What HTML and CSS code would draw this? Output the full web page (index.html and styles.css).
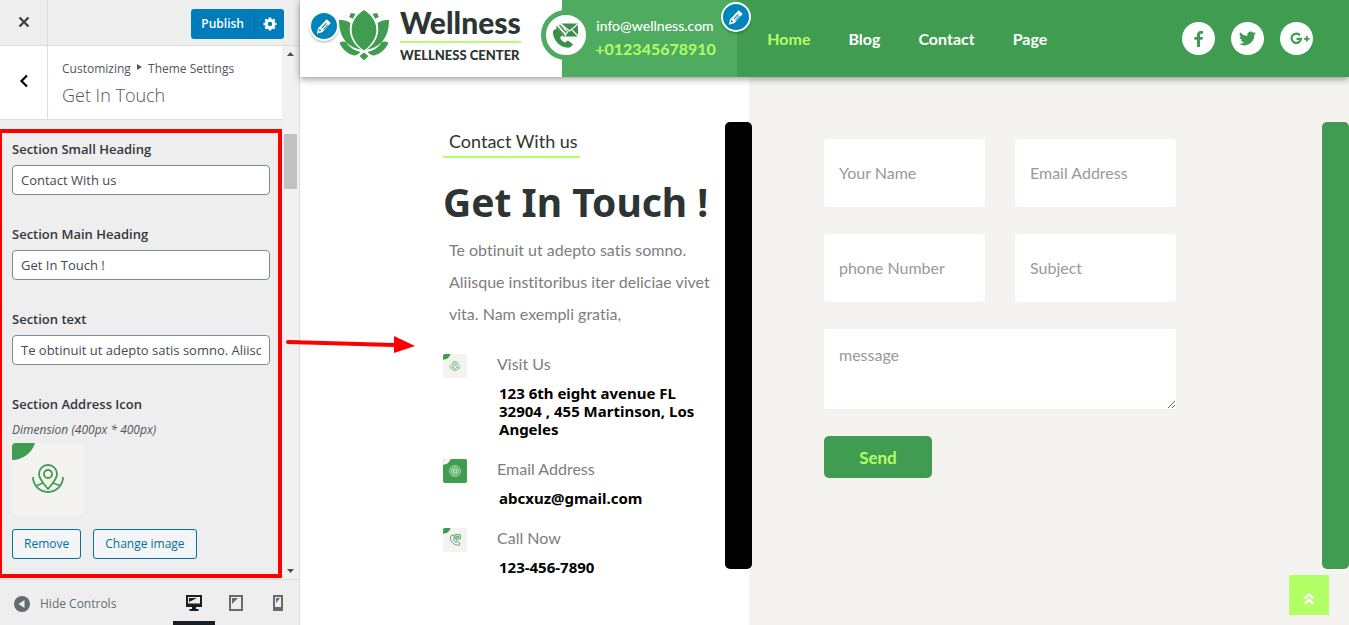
FILE: index.html
```html
<!DOCTYPE html>
<html lang="en">
<head>
<meta charset="utf-8">
<meta name="viewport" content="width=device-width, initial-scale=1">
<title>Customize: Get In Touch</title>
<link rel="stylesheet" href="styles.css">
</head>
<body>
<svg class="defs" aria-hidden="true">
  <symbol id="pencil" viewBox="0 0 20 20"><path fill="currentColor" fill-rule="evenodd" d="M13 2.500l4.500 4.200L8 17l-6 1.500L3.500 12.500zM5 13l-.8 3 3-.8zM8 12.800l5-5.500-.8-.8-5 5.500zM9.800 14.300l4.800-5.300-.8-.7-4.800 5.300z"/></symbol>
  <symbol id="place" viewBox="0 0 72 72">
    <path fill="var(--corner)" d="M0 0h23A24 24 0 0 1 0 17z"/>
    <g fill="none" stroke="var(--ink)" stroke-width="1.800"><path d="M36 46c-4-5-9-10-9-15a9 9 0 0 1 18 0c0 5-5 10-9 15z"/><circle cx="36" cy="31" r="4"/><path d="M21 34a15 15 0 1 0 30 0M24 43l7-3M41 40l8 3"/></g>
  </symbol>
  <symbol id="mailmark" viewBox="0 0 72 72">
    <path fill="var(--corner)" d="M0 0h23A24 24 0 0 1 0 17z"/>
    <g fill="none" stroke="var(--ink)" stroke-width="2.500"><circle cx="36" cy="36" r="16"/><circle cx="36" cy="36" r="10.500"/><path d="M30 31h12v10H30zM30 36h12"/></g>
  </symbol>
  <symbol id="callmark" viewBox="0 0 72 72">
    <path fill="var(--corner)" d="M0 0h23A24 24 0 0 1 0 17z"/>
    <g fill="none" stroke="var(--ink)" stroke-width="2.500"><path d="M25 22c-10 11 8 34 24 29l2-5-8-6-4 3c-4-1-8-7-8-10l4-3-4-9z"/><path d="M36 20h16v13H43l-3 4v-4h-4zM39 25h10M39 29h10"/></g>
  </symbol>
</svg>

<div class="customizer">
  <aside class="panel">
    <header class="panel-top">
      <button class="close" aria-label="Close customizer"><svg width="12" height="12" viewBox="0 0 12 12"><path d="M1.500 1.500l9 9M10.500 1.500l-9 9" stroke="#3c434a" stroke-width="2.400"/></svg></button>
      <div class="publish-group">
        <button class="publish">Publish</button>
        <button class="gear" aria-label="Publish settings"><svg width="14" height="14" viewBox="0 0 14 14"><circle cx="7" cy="7" r="3.700" fill="none" stroke="#fff" stroke-width="3"/><path stroke="#fff" stroke-width="2.600" d="M7 .5v2.500M7 11v2.500M.5 7H3M11 7h2.500M2.400 2.400l1.700 1.700M9.900 9.900l1.700 1.700M2.400 11.600l1.700-1.700M9.900 4.100l1.700-1.700"/></svg></button>
      </div>
    </header>
    <div class="panel-body">
      <div class="panel-main">
        <div class="section-title">
          <button class="back" aria-label="Back"><svg width="10" height="14" viewBox="0 0 10 14"><path d="M8 1.500L2.500 7 8 12.500" fill="none" stroke="#000" stroke-width="2.200"/></svg></button>
          <div class="titles">
            <p class="crumbs">Customizing <svg width="5" height="6" viewBox="0 0 5 6"><path d="M0 0l5 3-5 3z" fill="#50575e"/></svg> Theme Settings</p>
            <h3>Get In Touch</h3>
          </div>
        </div>
        <div class="fields">
          <div class="field"><label for="small">Section Small Heading</label><input id="small" type="text" value="Contact With us"></div>
          <div class="field"><label for="main">Section Main Heading</label><input id="main" type="text" value="Get In Touch !"></div>
          <div class="field"><label for="text">Section text</label><input id="text" type="text" value="Te obtinuit ut adepto satis somno. Aliisque institoribus iter deliciae vivet vita."></div>
          <div class="image-field">
            <h4>Section Address Icon</h4>
            <p class="hint">Dimension (400px * 400px)</p>
            <svg class="thumb tile"><use href="#place"/></svg>
            <div class="actions"><button>Remove</button><button>Change image</button></div>
          </div>
          <div class="highlight"></div>
        </div>
      </div>
      <div class="scrollbar" aria-hidden="true">
        <svg width="7" height="4" viewBox="0 0 7 4"><path d="M3.500 0L7 4H0z" fill="#505050"/></svg>
        <div class="scroll-thumb"></div>
        <svg width="7" height="4" viewBox="0 0 7 4"><path d="M0 0h7L3.500 4z" fill="#505050"/></svg>
      </div>
    </div>
    <footer class="panel-foot">
      <button class="hide"><svg width="16" height="16" viewBox="0 0 16 16"><circle cx="8" cy="8" r="8" fill="#656b70"/><path d="M10.500 4v8L4.500 8z" fill="#eee"/></svg>Hide Controls</button>
      <div class="devices">
        <button class="active" aria-label="Desktop"><svg width="16" height="16" viewBox="0 0 16 16"><path fill="#191e23" fill-rule="evenodd" d="M0 0h16v12H10v2h2.500v2h-9v-2H6v-2H0zM2 2v6.500h12V2z"/><path fill="#191e23" d="M3 3h8L3 7z"/></svg></button>
        <button aria-label="Tablet"><svg width="14" height="16" viewBox="0 0 14 16"><path fill="none" stroke="#656b70" stroke-width="2" d="M1 1h12v14H1z"/><path fill="#656b70" d="M3 3h6L3 9z"/></svg></button>
        <button aria-label="Mobile"><svg width="10" height="16" viewBox="0 0 10 16"><path fill="none" stroke="#656b70" stroke-width="2" d="M1 1h8v14H1z"/><path fill="#656b70" d="M3 3h4L3 8zM2 12h6v3H2z"/></svg></button>
      </div>
    </footer>
  </aside>

  <main class="preview">
    <header class="site-head">
      <div class="brand">
        <button class="edit" aria-label="Edit logo"><svg width="18" height="18"><use href="#pencil"/></svg></button>
        <svg class="lotus" width="50" height="50" viewBox="0 0 50 50" fill="#409c50"><path d="M25 0C9 10 8 28 25 40.500 42 28 41 10 25 0zM0 10c4-.5 8 .5 11.500 3C9 23 13 33 22 39.500 7 37 0 26 0 10zM50 10c-4-.5-8 .5-11.500 3C41 23 37 33 28 39.500 43 37 50 26 50 10zM.5 33c2-2 5-2 7-.5 3 4.500 7.500 8 14 9.500-2 2-4 3.500-6.500 3.500C9 44 4 40 .5 33zM49.500 33c-2-2-5-2-7-.5-3 4.500-7.500 8-14 9.500 2 2 4 3.500 6.500 3.500 6-1.500 11-5.500 14.500-12.500zM25 42.500l4.500 3.500L25 50.500 20.500 46zM12 3l4.500.8-2.500 5-4-1.800zM38 3l-4.500.8 2.500 5 4-1.800z"/></svg>
        <a class="brand-text" href="#"><span class="name">Wellness</span><span class="tag">WELLNESS CENTER</span></a>
      </div>
      <div class="contact">
        <span class="badge"><svg width="26" height="26" viewBox="0 0 26 26"><path fill="#3b8f49" d="M8 1.500h17v13H10z"/><path d="M8 2l8.500 7L25 2M12 14l3-5M25 14l-6-6" fill="none" stroke="#fff" stroke-width="1.200"/><path fill="#3b8f49" d="M0 9l4-3 6 7-3 2.500c1 2.500 2.500 4 5 5l3-2 5 4-3 3C7 27-1 17 0 9z"/><path d="M4 3.500l8 9M7 2.500l6 7" stroke="#fff" stroke-width="2.800"/><path d="M3.500 4.500l7.500 8.500M6.500 3l6 7" stroke="#3b8f49" stroke-width="1.500"/></svg></span>
        <span class="mail">info@wellness.com</span>
        <span class="phone">+012345678910</span>
        <button class="edit edit-corner" aria-label="Edit menu"><svg width="18" height="18"><use href="#pencil"/></svg></button>
      </div>
      <div class="navbar">
        <nav><a class="current" href="#">Home</a><a href="#">Blog</a><a href="#">Contact</a><a href="#">Page</a></nav>
        <div class="social">
          <a href="#" aria-label="Facebook"><svg width="9" height="16" viewBox="0 0 9 16"><path fill="#409c50" d="M9 .1v2.600H7.400C6.200 2.700 6 3.300 6 4.100v1.800h2.900l-.4 2.900H6V16H3V8.800H.4V5.900H3V3.800C3 1.300 4.500 0 6.700 0 7.800 0 8.700.1 9 .1z"/></svg></a>
          <a href="#" aria-label="Twitter"><svg width="17" height="17" viewBox="0 0 24 24"><path fill="#409c50" d="M24 4.600a10 10 0 0 1-2.800.8 5 5 0 0 0 2.100-2.700 10 10 0 0 1-3.100 1.200 4.900 4.900 0 0 0-8.400 4.500A14 14 0 0 1 1.700 3.200a4.900 4.900 0 0 0 1.500 6.500 5 5 0 0 1-2.200-.6 4.900 4.900 0 0 0 3.900 4.900 5 5 0 0 1-2.200.1 4.900 4.900 0 0 0 4.600 3.400A10 10 0 0 1 0 19.500a14 14 0 0 0 21.500-12.400A10 10 0 0 0 24 4.600z"/></svg></a>
          <a class="gplus" href="#" aria-label="Google Plus"><svg width="20" height="13" viewBox="0 0 20 13"><path d="M10 3.300A4.700 4.700 0 1 0 11 6.800H6.500" fill="none" stroke="#409c50" stroke-width="2.200"/><path d="M16.800 4v5.600M14 6.800h5.600" stroke="#409c50" stroke-width="1.800"/></svg></a>
        </div>
      </div>
    </header>

    <section class="touch">
      <div class="info">
        <div class="info-text">
          <p class="eyebrow">Contact With us</p>
          <h2>Get In Touch !</h2>
          <p class="lead">Te obtinuit ut adepto satis somno. Aliisque institoribus iter deliciae vivet vita. Nam exempli gratia,</p>
          <ul>
            <li><svg class="tile"><use href="#place"/></svg><div><h5>Visit Us</h5><p>123 6th eight avenue FL 32904 , 455 Martinson, Los Angeles</p></div></li>
            <li><svg class="tile inverse"><use href="#mailmark"/></svg><div><h5>Email Address</h5><p>abcxuz@gmail.com</p></div></li>
            <li><svg class="tile"><use href="#callmark"/></svg><div><h5>Call Now</h5><p>123-456-7890</p></div></li>
          </ul>
        </div>
        <div class="bar black"></div>
      </div>
      <div class="form-side">
        <form>
          <input type="text" placeholder="Your Name" aria-label="Your Name">
          <input type="email" placeholder="Email Address" aria-label="Email Address">
          <input type="tel" placeholder="phone Number" aria-label="phone Number">
          <input type="text" placeholder="Subject" aria-label="Subject">
          <textarea placeholder="message" aria-label="message"></textarea>
          <button type="button" class="send">Send</button>
        </form>
        <div class="bar green"></div>
        <a class="to-top" href="#" aria-label="Back to top"><svg width="10" height="12" viewBox="0 0 10 12"><path d="M.8 5.500L5 1.500l4.200 4M.8 11L5 7l4.200 4" fill="none" stroke="#fff" stroke-width="2.400"/></svg></a>
      </div>
    </section>
  </main>

  <svg class="arrow" width="130" height="20" viewBox="0 0 130 20" aria-hidden="true"><path d="M3 7l106 3" stroke="red" stroke-width="4" stroke-linecap="round"/><path d="M109 1l21 10-21 7z" fill="red"/></svg>
</div>
</body>
</html>
```

FILE: styles.css
```css
:root {
  --green: #409c50;
  --green-light: #4fab60;
  --lime: #b3ff66;
  --cream: #f4f3ef;
  --dark: #2c3531;
}

* { box-sizing: border-box; }
body { margin: 0; font-family: Lato, sans-serif; font-variant-ligatures: no-common-ligatures; }
h2, h3, h4, h5, p, ul { margin: 0; padding: 0; }
button, input, textarea { font: inherit; }
button { border: 0; padding: 0; background: none; cursor: pointer; }
a { color: inherit; text-decoration: none; }
svg { flex: none; }
.defs { position: absolute; width: 0; height: 0; }

.customizer { position: relative; display: flex; height: 100vh; overflow: hidden; }

/* Controls panel */
.panel {
  flex: none;
  width: 300px;
  display: flex;
  flex-direction: column;
  background: #eee;
  border-right: 1px solid #ddd;
  font: 13px/20px "Open Sans", sans-serif;
  color: #50575e;
}
.panel-top {
  display: flex;
  justify-content: space-between;
  align-items: center;
  height: 46px;
  padding-right: 15px;
  border-bottom: 1px solid #ddd;
}
.close { width: 48px; height: 45px; border-right: 1px solid #ddd; }
.publish-group { display: flex; margin-top: 3px; height: 30px; border-radius: 3px; background: #007cba; }
.publish { padding: 0 10px; color: #fff; font-size: 12px; font-weight: 600; }
.gear { display: grid; place-items: center; width: 30px; border-left: 1px solid #0074ae; }

.panel-body { flex: 1; display: flex; min-height: 0; }
.panel-main { flex: 1; min-width: 0; }
.section-title { display: flex; height: 74px; background: #fff; border-bottom: 1px solid #ddd; }
.back { width: 48px; border-right: 1px solid #ddd; }
.titles { padding: 13px 14px; }
.crumbs { line-height: 20px; font-size: 12px; }
.crumbs svg { margin: 0 3px 3px; }
.titles h3 { font: 300 18px/32px "Open Sans", sans-serif; }

.fields { position: relative; padding: 20px 12px; }
.highlight { position: absolute; inset: 9px 0 auto; height: 449px; border: 4px solid red; border-left-width: 2px; pointer-events: none; }
.field { padding-bottom: 30px; }
.field label, .image-field h4 { display: block; margin-bottom: 6px; font-size: 13px; line-height: 19px; font-weight: 600; color: #32373c; }
.field input {
  display: block;
  width: 100%;
  height: 30px;
  padding: 0 8px;
  border: 1px solid #7e8993;
  border-radius: 4px;
  background: #fff;
  color: #444b52;
}
.image-field h4 { margin: 0; }
.hint { margin-top: 6px; font-size: 12px; font-style: italic; line-height: 20px; }
.tile { --corner: #409c50; --ink: #409c50; background: var(--cream); border-radius: 2px; }
.tile.inverse { --corner: #f4f3ef; --ink: #d2efd6; background: var(--green); }
.thumb { display: block; width: 72px; height: 72px; margin-top: 3px; border-radius: 4px; }
.actions { display: flex; gap: 12px; margin-top: 14px; }
.actions button { height: 30px; padding: 0 11px; border: 1px solid #0071a1; border-radius: 3px; background: #f3f5f6; color: #0071a1; font-size: 12px; }

.scrollbar { flex: none; display: flex; flex-direction: column; align-items: center; width: 17px; padding: 6px 0; background: #f1f1f1; }
.scroll-thumb { width: 13px; height: 55px; margin: 78px 0 auto; background: #c1c1c1; }

.panel-foot { display: flex; justify-content: space-between; height: 46px; padding-left: 14px; border-top: 1px solid #ddd; }
.hide { display: flex; align-items: center; gap: 10px; padding-top: 2px; color: #656b70; font-size: 12px; }
.devices { display: flex; }
.devices button { display: grid; place-items: center; width: 42px; border-bottom: 4px solid transparent; padding-top: 4px; }
.devices .active { border-color: #191e23; }

/* Site preview */
.preview { flex: 1; min-width: 0; display: flex; flex-direction: column; background: #fff; }
.site-head { position: relative; z-index: 1; flex: none; display: flex; height: 77px; background: #fff; box-shadow: 0 2px 7px rgba(0, 0, 0, .4); }
.brand { width: 25%; display: flex; align-items: flex-start; padding: 9px 0 0 9px; }
.edit { display: grid; place-items: center; flex: none; width: 30px; height: 30px; border: 2px solid #fff; border-radius: 50%; background: #0085ba; color: #fff; box-shadow: 0 2px 2px rgba(0, 0, 0, .2); }
.brand .edit { margin-top: 2px; }
.lotus { margin-top: 1px; }
.brand-text { margin-left: 11px; color: var(--dark); }
.name { display: block; font: 900 30px/31px Lato, sans-serif; margin-top: -2px; padding-bottom: 3px; border-bottom: 2px solid var(--lime); }
.tag { display: block; font: 900 13px/16px Lato, sans-serif; margin-top: 4px; }
.contact { flex: none; width: 175px; position: relative; display: flex; flex-direction: column; padding: 16px 0 0 33px; background: var(--green-light); color: #fff; }
.badge { position: absolute; left: -21px; top: 10px; display: grid; place-items: center; width: 50px; height: 50px; border: 5px solid var(--green-light); border-radius: 50%; background: #fff; }
.mail { font-size: 14px; line-height: 20px; font-weight: 500; padding-left: 1px; }
.phone { font-size: 16px; line-height: 26px; font-weight: 700; color: var(--lime); }
.edit-corner { position: absolute; right: -14px; top: 2px; z-index: 1; }
.navbar { flex: 1; display: flex; justify-content: space-between; align-items: center; padding: 0 36px 0 30px; background: var(--green); color: #fff; }
nav { display: flex; gap: 38px; font-weight: 700; }
.current { color: var(--lime); }
.social { display: flex; gap: 16px; }
.social a { display: grid; place-items: center; width: 33px; height: 33px; border-radius: 50%; background: #fff; }
.social .gplus { padding-left: 6px; }

.touch { flex: 1; display: flex; min-height: 0; }
.info { position: relative; width: 42.8%; padding: 52px 34px 0 143px; }
.eyebrow { width: max-content; padding: 0 2px 3px 6px; border-bottom: 2px solid var(--lime); font-size: 18px; line-height: 24px; color: var(--dark); }
.info h2 { margin-top: 20px; font: 700 39px/48px "Noto Sans", sans-serif; color: var(--dark); white-space: nowrap; }
.lead { margin: 8px 0 20px; padding-left: 6px; font-size: 16px; line-height: 32px; color: #7d7d7d; }
.info ul { display: grid; gap: 17px; list-style: none; }
.info li { display: flex; align-items: flex-start; gap: 30px; }
.info .tile { width: 24px; height: 24px; margin-top: 4px; }
.info h5 { font-size: 16px; line-height: 28px; font-weight: 400; color: #7d7d7d; }
.info li p { margin-top: 6px; padding-left: 2px; font: 700 15px/18px "Noto Sans", sans-serif; color: #000; }
.bar { position: absolute; top: 45px; width: 27px; height: 447px; border-radius: 5px; z-index: 1; }
.black { right: -3px; background: #000; }
.green { right: 0; background: var(--green); }

.form-side { position: relative; flex: 1; padding: 62px 173px 0 75px; background: var(--cream); }
form { display: grid; grid-template-columns: 1fr 1fr; gap: 27px 30px; }
form input, textarea { display: block; width: 100%; min-width: 0; padding: 0 15px; border: 0; border-radius: 4px; background: #fff; font-size: 16px; }
form input { height: 68px; padding-bottom: 2px; }
textarea { grid-column: 1 / -1; height: 80px; padding-top: 16px; border-radius: 0; line-height: 20px; resize: vertical; }
form ::placeholder { color: #999; opacity: 1; }
.send { justify-self: start; width: 108px; height: 42px; border-radius: 5px; background: var(--green); color: var(--lime); font-size: 17px; font-weight: 700; }
.to-top { position: absolute; right: 20px; bottom: 10px; display: grid; place-items: center; width: 40px; height: 40px; padding-top: 7px; background: var(--lime); }

/* Callout from the controls to the preview */
.arrow { position: absolute; left: 285px; top: 335px; z-index: 2; }
```
